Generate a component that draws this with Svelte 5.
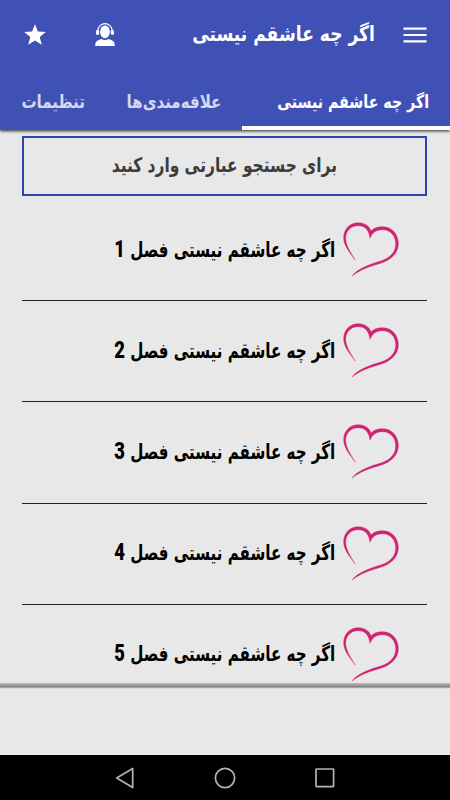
<script lang="ts">
  const title = 'اگر چه عاشقم نیستی';
  const chapters = [1, 2, 3, 4, 5];
  const tabs = [
    { id: 'book', label: title },
    { id: 'favorites', label: 'علاقه‌مندی‌ها' },
    { id: 'settings', label: 'تنظیمات' }
  ];

  let activeTab = $state('book');
</script>

<div class="app" dir="rtl">
  <header>
    <div class="toolbar">
      <button class="icon-btn menu" aria-label="menu">
        <svg width="24" height="18" viewBox="0 0 24 18" stroke="currentColor" stroke-width="2.2">
          <path d="M0.5 2.7h23M0.5 9h23M0.5 15.3h23" />
        </svg>
      </button>
      <h1><span>{title}</span></h1>
      <button class="icon-btn support" aria-label="support">
        <svg width="20" height="24" viewBox="0 0 20 24" fill="currentColor">
          <path d="M3 8V7.2a7 6.6 0 0 1 14 0V8" fill="none" stroke="currentColor" stroke-width="1.1" />
          <rect x="1" y="7" width="3.2" height="5" rx="1.4" />
          <rect x="15.8" y="7" width="3.2" height="5" rx="1.4" />
          <ellipse cx="10" cy="8.8" rx="4.9" ry="6.4" />
          <path d="M0.3 23v-1.5c0-3 2.4-4.6 6-5.6 2 1.4 5.4 1.4 7.4 0 3.6 1 6 2.6 6 5.6V23z" />
        </svg>
      </button>
      <button class="icon-btn star" aria-label="star">
        <svg width="22" height="22" viewBox="0 0 22 22" fill="currentColor">
          <path d="M11 0.2l2.9 7.4 7.9.4-6.1 5 2.1 7.8-6.8-4.3-6.8 4.3 2.1-7.8L.2 8l7.9-.4z" />
        </svg>
      </button>
    </div>
    <nav>
      {#each tabs as tab (tab.id)}
        <button
          class="tab {tab.id}"
          class:active={activeTab === tab.id}
          onclick={() => (activeTab = tab.id)}
        >
          <span>{tab.label}</span>
        </button>
      {/each}
    </nav>
  </header>

  <main>
    <div class="search"><span>برای جستجو عبارتی وارد کنید</span></div>
    <ul>
      {#each chapters as chapter (chapter)}
        <li>
          <svg class="heart" width="56" height="55" viewBox="40 35 170 165" preserveAspectRatio="none">
            <path
              d="M77 149C62 128 42 107 42 82C42 55 62 37 86 37C107 37 121 48 125 62C132 53 145 49 159 49C190 49 208 72 208 100C208 130 185 150 150 160C115 169 90 180 67 197C85 176 110 166 145 155C180 146 200 128 200 100C200 75 183 58 160 58C140 58 128 68 122 84C119 60 108 46 86 46C66 46 49 60 48 82C48 105 64 128 77 149Z"
            />
          </svg>
          <span class="chapter">{title} فصل <b>{chapter}</b></span>
        </li>
      {/each}
    </ul>
  </main>

  <div class="banner"></div>

  <footer dir="ltr">
    <svg width="20" height="22" viewBox="0 0 20 22"><path d="M17.7 1.5v19L1.7 11z" /></svg>
    <svg width="22" height="22" viewBox="0 0 22 22"><circle cx="11" cy="11" r="9.6" /></svg>
    <svg width="20" height="20" viewBox="0 0 20 20"><rect x="1" y="1" width="17.6" height="17.6" rx="0.6" /></svg>
  </footer>
</div>

<style>
  :global(body) {
    margin: 0;
  }

  .app {
    display: flex;
    flex-direction: column;
    width: 450px;
    height: 800px;
    overflow: hidden;
    background: #e8e8e8;
    font-family: 'DejaVu Sans Condensed', 'DejaVu Sans', sans-serif;
    font-weight: 700;
  }

  button {
    padding: 0;
    border: none;
    background: none;
    color: inherit;
    font: inherit;
  }

  span {
    display: inline-block;
    white-space: nowrap;
  }

  header {
    position: relative;
    flex: none;
    height: 130px;
    background: #3f51b5;
    color: #fff;
    box-shadow: 0 1px 3px rgba(0, 0, 0, 0.85);
  }

  .toolbar {
    display: flex;
    align-items: center;
    height: 70px;
    padding: 0 23px 0 24px;
  }

  .icon-btn {
    display: flex;
  }

  .icon-btn.support {
    margin-left: 49px;
  }

  h1 {
    flex: 1;
    margin: 0 28px 3px 0;
    font-size: 21px;
    line-height: 30px;
  }

  h1 span {
    transform: scaleX(0.905);
    transform-origin: right;
  }

  nav {
    display: flex;
    height: 60px;
  }

  .tab {
    box-sizing: border-box;
    height: 60px;
    padding-top: 6px;
    border-bottom: 4px solid transparent;
    font-size: 18px;
    color: rgba(255, 255, 255, 0.78);
  }

  .tab span {
    transform: scaleX(0.93);
  }

  .tab.active {
    border-color: #fff;
    color: #fff;
  }

  .tab.book {
    width: 208px;
    padding-right: 21px;
    text-align: right;
  }

  .tab.book span {
    transform: scaleX(0.877);
    transform-origin: right;
  }

  .tab.favorites {
    width: 136px;
  }

  .tab.settings {
    width: 106px;
  }

  main {
    box-sizing: border-box;
    flex: none;
    height: 553px;
    overflow: hidden;
    padding: 6px 23px 0 22px;
  }

  .search {
    box-sizing: border-box;
    display: flex;
    align-items: center;
    justify-content: center;
    height: 60px;
    padding-bottom: 3px;
    border: 2px solid #2f43a8;
    font-size: 20px;
    color: #3c3c3c;
  }

  .search span {
    transform: scaleX(0.857);
  }

  ul {
    margin: 4px 0 0;
    padding: 0;
    list-style: none;
  }

  li {
    box-sizing: border-box;
    display: flex;
    align-items: center;
    height: 101.2px;
    padding: 0 28px 1px 0;
    border-bottom: 1px solid #222;
    font-size: 21px;
    color: #000;
  }

  .heart {
    margin-left: 8px;
    fill: #d0226f;
    stroke: #d0226f;
    stroke-width: 1.2;
  }

  .chapter {
    padding-bottom: 1px;
    transform: scaleX(0.8);
    transform-origin: right;
  }

  .chapter b {
    font-family: Roboto, sans-serif;
    font-size: 23px;
  }

  .banner {
    box-sizing: border-box;
    flex: 1;
    background: linear-gradient(#bdbdbd, #808080 4px, #c8c8c8 5px, #e8e8e8 6px);
  }

  footer {
    display: flex;
    align-items: center;
    justify-content: space-between;
    flex: none;
    box-sizing: border-box;
    height: 45px;
    padding: 0 115px;
    background: #000;
  }

  footer svg {
    fill: none;
    stroke: #b4b4b4;
    stroke-width: 1.7;
    stroke-linejoin: round;
  }
</style>
